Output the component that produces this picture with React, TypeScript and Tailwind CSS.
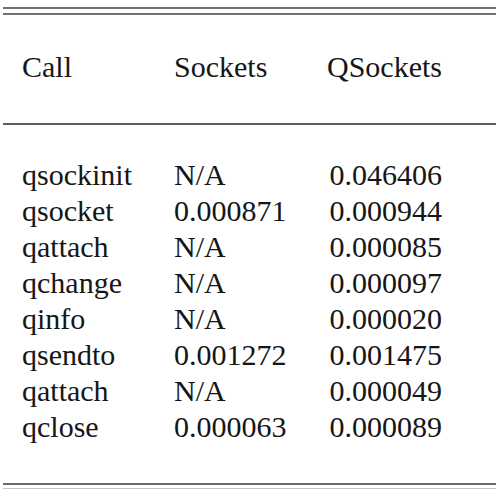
import React from 'react';

const rows: [string, string, string][] = [
    ['qsockinit', 'N/A', '0.046406'],
    ['qsocket', '0.000871', '0.000944'],
    ['qattach', 'N/A', '0.000085'],
    ['qchange', 'N/A', '0.000097'],
    ['qinfo', 'N/A', '0.000020'],
    ['qsendto', '0.001272', '0.001475'],
    ['qattach', 'N/A', '0.000049'],
    ['qclose', '0.000063', '0.000089'],
];

const Row = ({ cells }: { cells: [string, string, string] }) => (
    <div className="grid grid-cols-[152px_127px_141px] pl-[19px] h-[36px] leading-[36px]">
        <span>{cells[0]}</span>
        <span>{cells[1]}</span>
        <span className="text-right">{cells[2]}</span>
    </div>
);

export default function App() {
    return (
        <div className="w-[499px] h-[489px] bg-white overflow-hidden">
            <div className="px-[3px] pt-[7px] text-[30px] text-[#161616] font-['Liberation_Serif','DejaVu_Serif','Times_New_Roman',serif]">
                {/* top double rule */}
                <div className="h-[2px] bg-[#707070]" />
                <div className="h-[2px] bg-[#707070] mt-[4px]" />

                {/* header */}
                <div className="mt-[34px]">
                    <Row cells={['Call', 'Sockets', 'QSockets']} />
                </div>
                <div className="h-[2px] bg-[#5e5e5e] mt-[38px]" />

                {/* body */}
                <div className="mt-[32px] flex flex-col">
                    {rows.map((r, i) => (
                        <Row key={i} cells={r} />
                    ))}
                </div>

                {/* bottom double rule */}
                <div className="h-[2px] bg-[#6a6a6a] mt-[38px]" />
                <div className="h-[1px] bg-[#c4c4c4] mt-[3px]" />
            </div>
        </div>
    );
}
